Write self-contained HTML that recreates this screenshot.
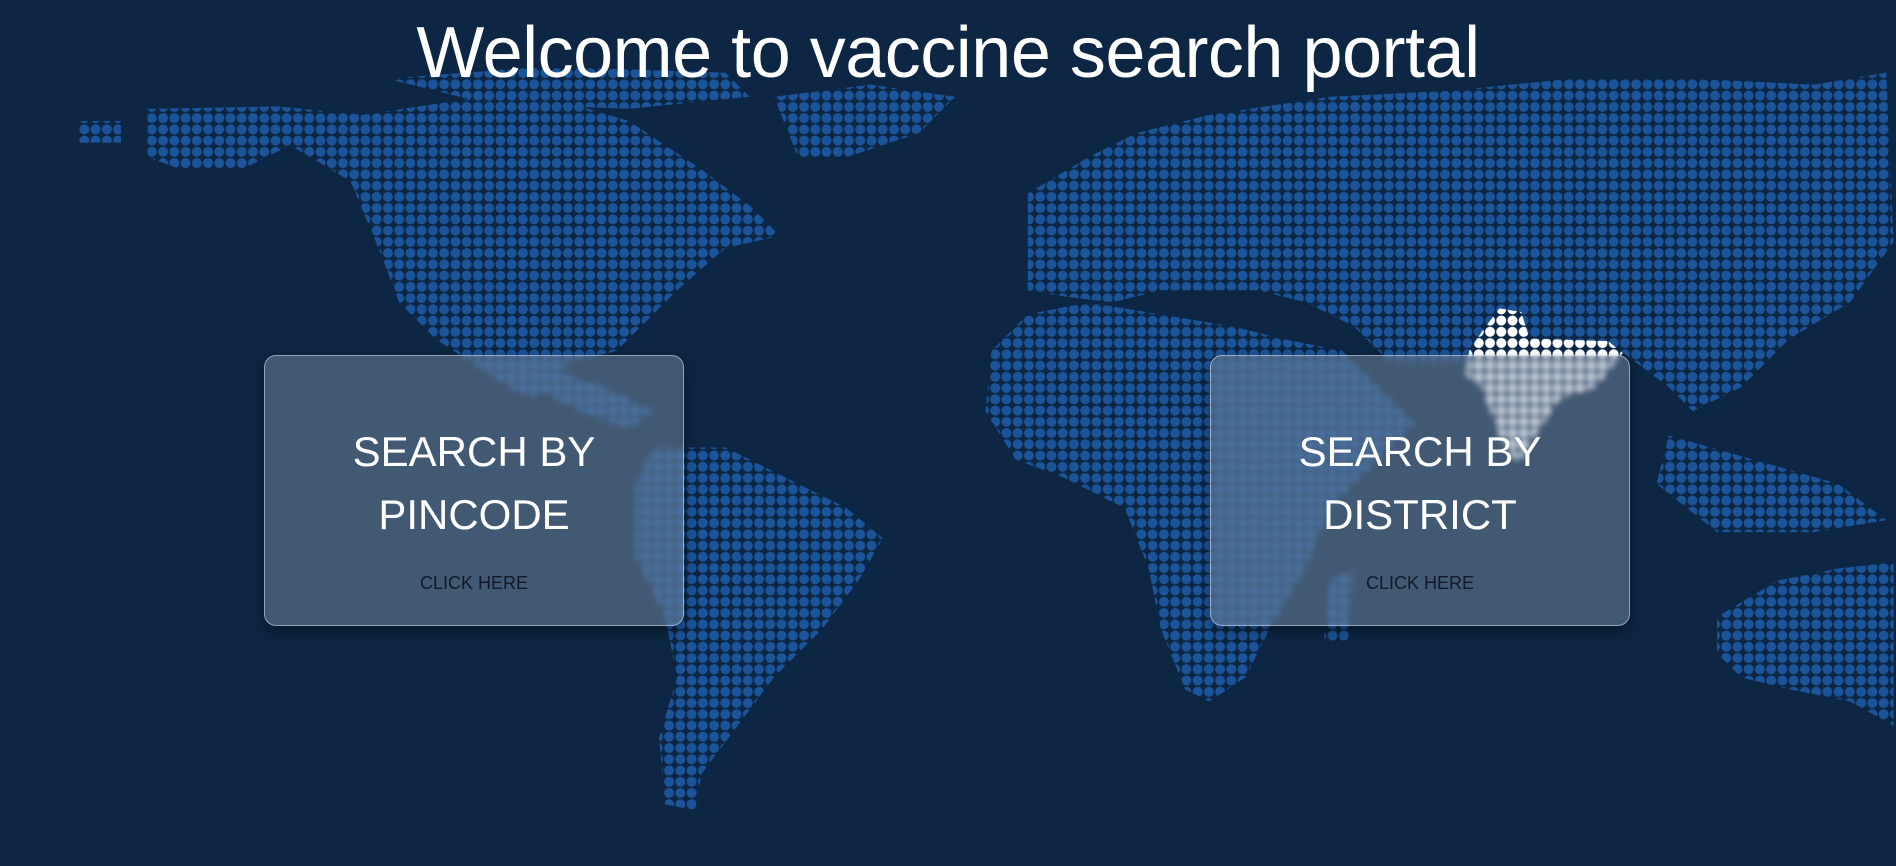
<!DOCTYPE html>
<html><head><meta charset="utf-8">
<style>
html,body{margin:0;padding:0;}
body{width:1896px;height:866px;background:#0c2643;overflow:hidden;position:relative;font-family:"Segoe UI","Liberation Sans","DejaVu Sans",sans-serif;}
svg.map{position:absolute;left:0;top:0;width:1896px;height:866px;}
h1{position:absolute;left:0;right:0;top:8px;margin:0;text-align:center;color:#fff;font-weight:400;font-size:72px;line-height:90px;letter-spacing:-0.5px;}
.card{position:absolute;top:355px;width:420px;height:271px;box-sizing:border-box;border:1px solid rgba(255,255,255,0.45);border-radius:12px;background:rgba(140,160,180,0.42);backdrop-filter:blur(3px);-webkit-backdrop-filter:blur(3px);box-shadow:0 6px 14px rgba(0,0,0,0.35);text-align:center;}
.card .t{color:#fff;font-size:42px;line-height:63px;margin-top:64px;}
.card .c{color:#111a26;font-size:18px;margin-top:27px;font-family:"Liberation Sans",sans-serif;}
</style></head><body>
<svg class="map" viewBox="0 0 1568 716" preserveAspectRatio="none">
<defs>
<pattern id="d" patternUnits="userSpaceOnUse" width="9.3" height="9.3"><circle cx="4.65" cy="4.65" r="4.1" fill="#1c5499"/></pattern>
<pattern id="w" patternUnits="userSpaceOnUse" width="9.3" height="9.3"><circle cx="4.65" cy="4.65" r="4.1" fill="#ffffff"/></pattern>
</defs>
<g fill="url(#d)">
<polygon points="122,90 230,88 300,95 400,80 470,85 520,100 580,140 620,170 645,195 600,205 560,240 530,270 510,290 470,300 440,330 420,320 390,300 360,280 330,250 315,210 290,150 240,120 200,140 150,140 122,130"/>
<polygon points="640,80 720,70 790,80 760,110 700,130 660,130"/>
<polygon points="320,65 450,55 600,60 620,80 520,90 400,85"/>
<polygon points="420,300 470,310 500,320 540,340 520,355 480,340 440,320"/>
<polygon points="540,370 600,370 650,395 700,420 730,445 710,480 680,520 640,560 610,600 580,640 575,670 550,665 545,610 560,560 550,510 525,460 525,400"/>
<polygon points="850,160 900,130 940,110 1000,95 1100,80 1200,75 1300,65 1400,65 1500,70 1560,60 1566,200 1530,250 1480,280 1440,320 1400,340 1380,320 1340,290 1300,300 1260,290 1230,300 1150,300 1120,270 1080,250 1040,240 1000,240 960,240 920,250 880,245 850,240"/>
<polygon points="820,290 850,260 900,250 960,260 1020,270 1060,280 1110,290 1150,330 1170,350 1120,400 1100,420 1080,470 1050,520 1030,560 1000,580 980,570 960,520 950,470 930,420 880,395 840,380 815,340"/>
<polygon points="1100,480 1120,470 1115,530 1095,530"/>
<polygon points="1380,360 1450,380 1520,400 1560,430 1500,440 1420,440 1370,400"/>
<polygon points="1420,510 1470,480 1520,470 1566,465 1566,600 1530,580 1480,570 1440,560 1420,540"/>
<polygon points="65,100 100,100 100,118 65,118"/>
</g>
<polygon fill="url(#w)" points="1215,290 1225,275 1240,255 1258,258 1265,280 1330,282 1342,292 1320,320 1290,330 1270,360 1255,385 1240,360 1225,320 1212,310"/>
</svg>
<h1>Welcome to vaccine search portal</h1>
<div class="card" style="left:264px"><div class="t">SEARCH BY<br>PINCODE</div><div class="c">CLICK HERE</div></div>
<div class="card" style="left:1210px"><div class="t">SEARCH BY<br>DISTRICT</div><div class="c">CLICK HERE</div></div>
</body></html>
